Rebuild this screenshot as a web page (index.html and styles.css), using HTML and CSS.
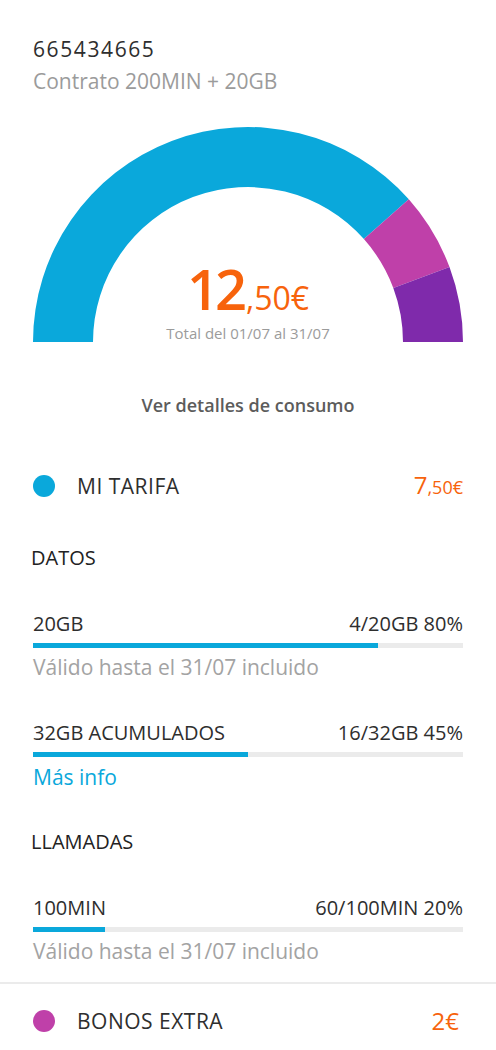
FILE: index.html
```html
<!DOCTYPE html>
<html lang="es">
<head>
    <meta charset="UTF-8">
    <meta name="viewport" content="width=device-width, initial-scale=1.0">
    <title>Consumo</title>
    <link rel="stylesheet" href="styles.css">
</head>
<body>
    <div class="container">
        <div class="header">
            <div class="header__number">665434665</div>
            <div class="header__plan">Contrato 200MIN + 20GB</div>
        </div>

        <div class="gauge">
            <svg class="gauge__chart" viewBox="0 0 430 215" width="430" height="215">
                <path fill="#0aa8db" d="M0 215 A215 215 0 0 1 375.8 72.3 L330.9 112.1 A155 155 0 0 0 60 215 Z"/>
                <path fill="#bf40a9" d="M375.8 72.3 A215 215 0 0 1 416.5 140.1 L360.3 161 A155 155 0 0 0 330.9 112.1 Z"/>
                <path fill="#7f2aab" d="M416.5 140.1 A215 215 0 0 1 430 215 L370 215 A155 155 0 0 0 360.3 161 Z"/>
            </svg>
            <div class="gauge__total">
                <div class="amount"><span class="amount__int">12</span><span class="amount__dec">,50€</span></div>
                <div class="gauge__period">Total del 01/07 al 31/07</div>
            </div>
        </div>

        <div class="details-link">Ver detalles de consumo</div>

        <div class="group">
            <span class="group__dot group__dot--blue"></span>
            <span class="group__name">MI TARIFA</span>
            <span class="group__price"><span class="group__price-int">7</span>,50€</span>
        </div>

        <div class="section-title">DATOS</div>

        <div class="usage">
            <div class="usage__head">
                <span>20GB</span>
                <span>4/20GB 80%</span>
            </div>
            <div class="usage__bar"><div class="usage__fill" style="width: 80.2%"></div></div>
            <div class="usage__note">Válido hasta el 31/07 incluido</div>
        </div>

        <div class="usage">
            <div class="usage__head">
                <span>32GB ACUMULADOS</span>
                <span>16/32GB 45%</span>
            </div>
            <div class="usage__bar"><div class="usage__fill" style="width: 50%"></div></div>
            <div class="usage__link">Más info</div>
        </div>

        <div class="section-title section-title--next">LLAMADAS</div>

        <div class="usage">
            <div class="usage__head">
                <span>100MIN</span>
                <span>60/100MIN 20%</span>
            </div>
            <div class="usage__bar"><div class="usage__fill" style="width: 16.7%"></div></div>
            <div class="usage__note">Válido hasta el 31/07 incluido</div>
        </div>
    </div>

    <div class="divider"></div>

    <div class="container">
        <div class="group group--extra">
            <span class="group__dot group__dot--pink"></span>
            <span class="group__name">BONOS EXTRA</span>
            <span class="group__price group__price--big">2€</span>
        </div>
    </div>
</body>
</html>
```
FILE: styles.css
```css
body {
    margin: 0;
    padding: 0;
    background: #fff;
    color: #333;
    font-family: "Open Sans", sans-serif;
}
.container {
    padding: 0 33px;
}
.header {
    padding-top: 33px;
}
.header__number {
    font-size: 21px;
    line-height: 32px;
    letter-spacing: 1.6px;
    color: #2e2e2e;
}
.header__plan {
    font-size: 21px;
    line-height: 32px;
    color: #9b9b9b;
}
.gauge {
    position: relative;
    margin-top: 30px;
    height: 215px;
}
.gauge__chart {
    display: block;
}
.gauge__total {
    position: absolute;
    left: 0;
    right: 0;
    bottom: 0;
    text-align: center;
}
.amount {
    color: #f7630c;
    line-height: 60px;
    height: 60px;
}
.amount__int {
    font-size: 56px;
    font-weight: 600;
    letter-spacing: -4px;
}
.amount__dec {
    font-size: 32px;
    line-height: 32px;
    padding-left: 3px;
}
.gauge__period {
    margin-top: 6px;
    font-size: 15px;
    line-height: 18px;
    color: #9b9b9b;
}
.details-link {
    margin-top: 51px;
    text-align: center;
    font-size: 18px;
    line-height: 24px;
    font-weight: 600;
    color: #5c5c5c;
}
.group {
    display: flex;
    align-items: center;
    margin-top: 55px;
    height: 28px;
}
.group__dot {
    width: 22px;
    height: 22px;
    border-radius: 50%;
    margin-right: 22px;
}
.group__dot--blue {
    background: #0aa8db;
}
.group__dot--pink {
    background: #bf40a9;
}
.group__name {
    flex: 1;
    font-size: 21px;
    line-height: 28px;
    letter-spacing: 0.5px;
    color: #2e2e2e;
}
.group__price {
    font-size: 18px;
    line-height: 28px;
    color: #f7630c;
}
.group__price-int {
    font-size: 24px;
}
.group__price--big {
    font-size: 24px;
    padding-right: 4px;
}
.group--extra {
    margin-top: 23px;
}
.section-title {
    margin-top: 44px;
    margin-left: -2px;
    font-size: 20px;
    line-height: 28px;
    color: #222;
}
.section-title--next {
    margin-top: 37px;
}
.usage {
    margin-top: 38px;
}
.usage__head {
    display: flex;
    justify-content: space-between;
    font-size: 20px;
    line-height: 28px;
    color: #2e2e2e;
}
.usage__bar {
    margin-top: 5px;
    height: 5px;
    background: #ebebeb;
}
.usage__fill {
    height: 100%;
    background: #0aa8db;
}
.usage__note {
    margin-top: 5px;
    font-size: 21px;
    line-height: 28px;
    color: #a3a3a3;
}
.usage__link {
    margin-top: 6px;
    font-size: 21px;
    line-height: 28px;
    color: #0aa8db;
}
.divider {
    margin-top: 17px;
    height: 2px;
    background: #ebebeb;
}
```
